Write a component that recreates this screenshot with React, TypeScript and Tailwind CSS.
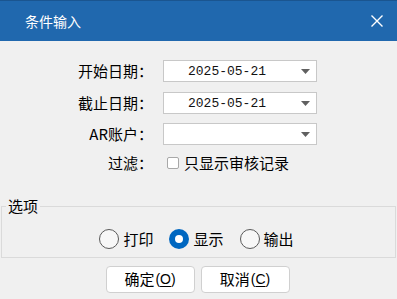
import React from 'react';

const FONT = { fontFamily: '"Noto Sans CJK SC", "Liberation Sans", sans-serif' };

const Arrow = () => (
    <svg width="9" height="5" viewBox="0 0 9 5" className="shrink-0">
        <path d="M0 0 H9 L4.5 5 Z" fill="#606060" />
    </svg>
);

const Combo: React.FC<{ value?: string }> = ({ value }) => (
    <div className="w-[154px] h-[22px] border border-[#c8c8c8] bg-white flex items-center pr-[6px]">
        <span className="flex-1 pl-[24px] text-[13px] text-[#111] font-['Liberation_Mono',monospace] leading-none">
            {value}
        </span>
        <Arrow />
    </div>
);

const Radio: React.FC<{ label: string; checked?: boolean }> = ({ label, checked }) => (
    <div className="flex items-center gap-[4px]">
        {checked ? (
            <span className="w-[20px] h-[20px] rounded-full bg-[#0067c0] flex items-center justify-center">
                <span className="w-[8px] h-[8px] rounded-full bg-white" />
            </span>
        ) : (
            <span className="w-[20px] h-[20px] rounded-full border border-[#5a5a5a] bg-[#f7f7f7]" />
        )}
        <span>{label}</span>
    </div>
);

const Button: React.FC<{ text: string; hot: string }> = ({ text, hot }) => (
    <button className="w-[89px] h-[27px] rounded-[4px] border border-[#d0d0d0] bg-white flex items-center justify-center text-[15px] text-black">
        {text}
        <span className="font-['Liberation_Sans',sans-serif] text-[14px] ml-[1px]">
            (<span className="underline underline-offset-2">{hot}</span>)
        </span>
    </button>
);

export default function App() {
    return (
        <div className="w-[397px] h-[299px] bg-[#f0f0f0] flex flex-col overflow-hidden text-[15px] text-black" style={FONT}>
            <div className="h-[41px] shrink-0 bg-[#2068ae] border-t border-[#1a5590] flex items-center justify-between pl-[25px] pr-[14px] text-white">
                <span className="text-[14px]">条件输入</span>
                <svg width="12" height="12" viewBox="0 0 12 12">
                    <path d="M0.5 0.5 L11.5 11.5 M11.5 0.5 L0.5 11.5" stroke="white" strokeWidth="1.4" />
                </svg>
            </div>

            <div className="grid grid-cols-[153px_154px] gap-x-[10px] mt-[19px] items-center">
                <span className="text-right h-[22px] leading-[22px]">开始日期：</span>
                <Combo value="2025-05-21" />
            </div>
            <div className="grid grid-cols-[153px_154px] gap-x-[10px] mt-[10px] items-center">
                <span className="text-right h-[22px] leading-[22px]">截止日期：</span>
                <Combo value="2025-05-21" />
            </div>
            <div className="grid grid-cols-[153px_154px] gap-x-[10px] mt-[9px] items-center">
                <span className="text-right h-[22px] leading-[22px]">AR账户：</span>
                <Combo />
            </div>
            <div className="grid grid-cols-[153px_154px] gap-x-[10px] mt-[9px] items-center h-[18px]">
                <span className="text-right leading-[18px]">过滤：</span>
                <div className="flex items-center pl-[4px] gap-[5px]">
                    <span className="w-[12px] h-[12px] rounded-[2px] border border-[#a8a8a8] bg-white" />
                    <span className="leading-[18px]">只显示审核记录</span>
                </div>
            </div>

            <fieldset className="mx-[1px] mt-[24px] border border-[#dadada] pt-[13px] pb-[8px]">
                <legend className="ml-[4px] px-[2px] leading-[20px]">选项</legend>
                <div className="h-[20px] flex items-center justify-center gap-[16px] pr-[4px]">
                    <Radio label="打印" />
                    <Radio label="显示" checked />
                    <Radio label="输出" />
                </div>
            </fieldset>

            <div className="mt-[8px] flex justify-center gap-[6px] pr-[2px]">
                <Button text="确定" hot="O" />
                <Button text="取消" hot="C" />
            </div>
        </div>
    );
}
